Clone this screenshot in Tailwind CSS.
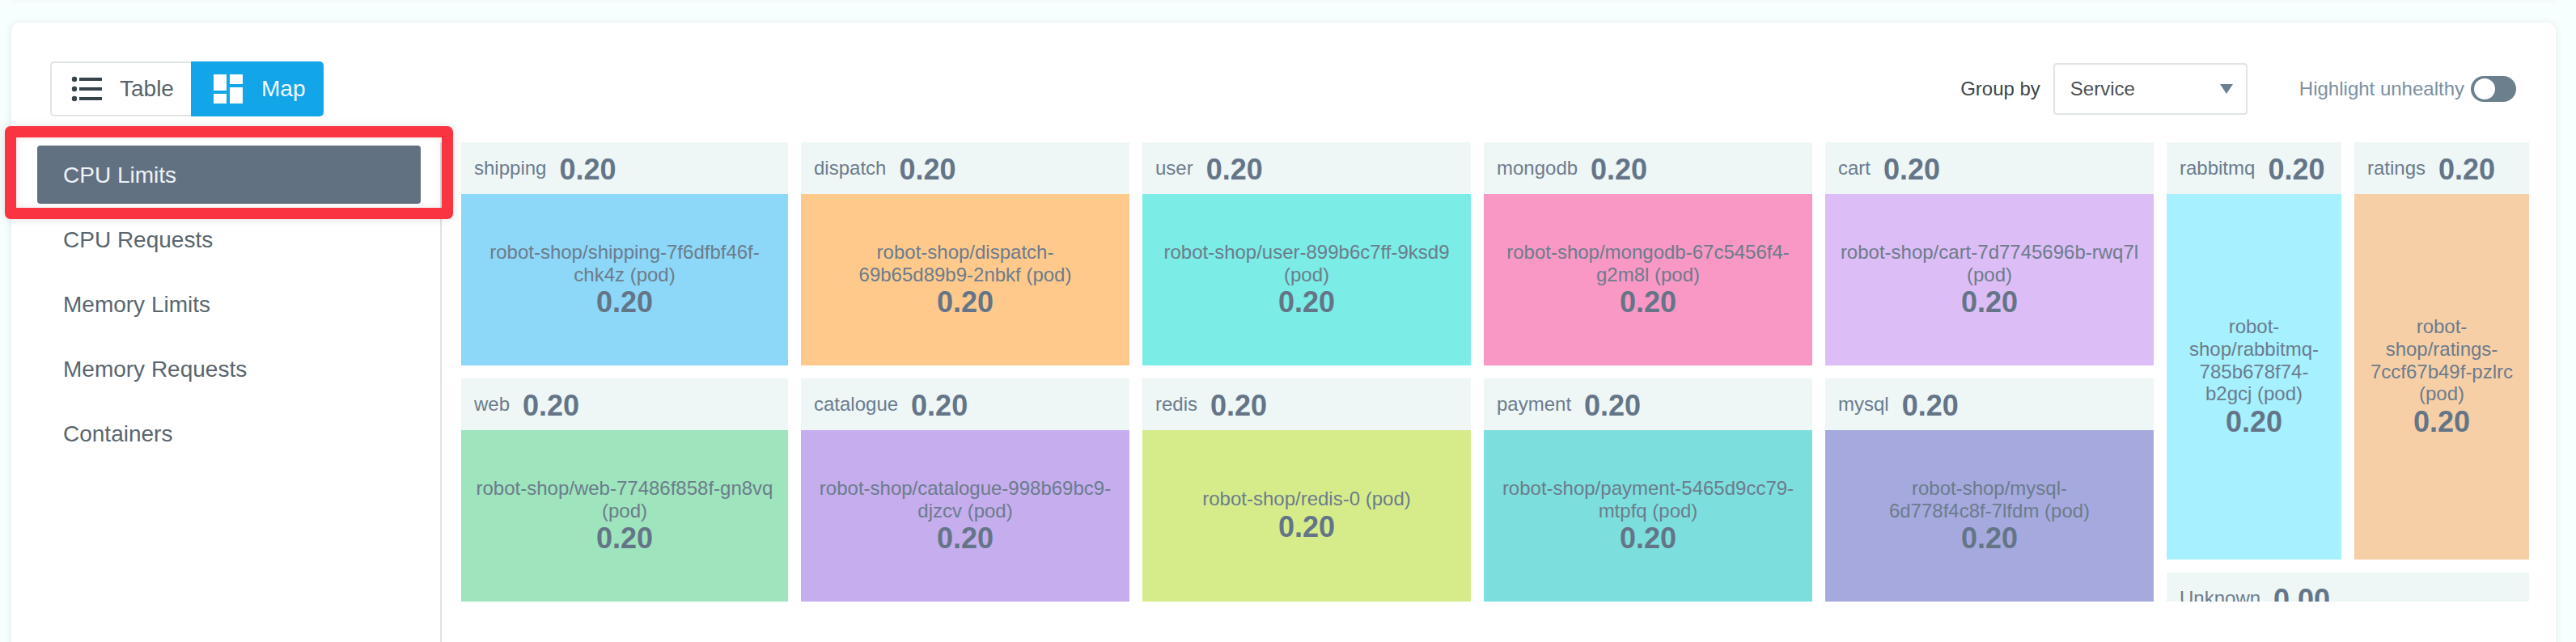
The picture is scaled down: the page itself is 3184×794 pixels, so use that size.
<!DOCTYPE html>
<html lang="en">
<head>
<meta charset="utf-8">
<title>Resource map</title>
<script src="https://cdn.jsdelivr.net/npm/@tailwindcss/browser@4"></script>
</head>
<body class="w-[3184px] h-[794px] overflow-hidden bg-[#f7fffe] font-['Liberation_Sans',Arial,sans-serif] flex flex-col relative">
  <!-- bottom edge of the previous card -->
  <div class="h-px shrink-0 ml-3.5 w-[3145px] bg-[#f9fafa] shadow-[0_0_5px_rgba(90,60,60,0.14)]"></div>
  <section class="mt-[27px] ml-3.5 w-[3145px] h-[800px] shrink-0 rounded-[10px] bg-white shadow-[0_1px_8px_rgba(60,80,60,0.14)] flex flex-col">
    <header class="h-[148px] shrink-0 flex items-start justify-between pl-12 pr-[49px] pt-12">
      <div class="flex h-[68px] w-[338px] text-[28px]">
        <button class="flex items-center w-[174px] rounded-l-[5px] border-2 border-r-0 border-[#dfe6e5] text-[#56636a] pl-[24px]">
          <svg class="w-[40px] h-[32px] shrink-0" viewBox="0 0 40 32" fill="#36444a"><circle cx="4" cy="4" r="3.2"/><circle cx="4" cy="16" r="3.2"/><circle cx="4" cy="28" r="3.2"/><path d="M10 2h28v4H10zM10 14h28v4H10zM10 26h28v4H10z"/></svg>
          <span class="ml-5">Table</span>
        </button>
        <button class="flex items-center flex-1 rounded-r-[5px] bg-[#12a5e8] text-[#f0faff] pl-7">
          <svg class="w-9 h-9 shrink-0" viewBox="0 0 36 36" fill="#fff"><path d="M0 0h16v20H0zM20 0h16v12H20zM0 24h16v12H0zM20 16h16v20H20z"/></svg>
          <span class="ml-[23px]">Map</span>
        </button>
      </div>
      <div class="flex items-center h-[68px] text-2xl">
        <span class="text-[#3d4648]">Group by</span>
        <div class="ml-4 w-[240px] h-16 border-2 border-[#dfe6e5] rounded-[4px] flex items-center justify-between pl-[19px] pr-4 text-[#4a4f51]">
          <span>Service</span>
          <svg class="w-4 h-3" viewBox="0 0 16 12"><path d="M0 0h16L8 12z" fill="#6b8090"/></svg>
        </div>
        <span class="ml-16 text-[#7c90a1]">Highlight unhealthy</span>
        <div class="ml-2 w-14 h-8 rounded-full bg-[#6b7f8d] flex items-center pl-1"><div class="w-[26px] h-[26px] rounded-full bg-white"></div></div>
      </div>
    </header>
    <div class="flex flex-1">
      <nav class="w-[532px] border-r-2 border-[#dde4e3] flex flex-col gap-2 pl-8 pt-1 text-[28px] text-[#5a666e]">
        <a class="w-[474px] h-[72px] rounded-[4px] bg-[#627182] text-[#eef2f4] flex items-center pl-8 pt-px">CPU Limits</a>
        <a class="h-[72px] flex items-center pl-8 pt-px">CPU Requests</a>
        <a class="h-[72px] flex items-center pl-8 pt-px">Memory Limits</a>
        <a class="h-[72px] flex items-center pl-8 pt-px">Memory Requests</a>
        <a class="h-[72px] flex items-center pl-8 pt-px">Containers</a>
      </nav>
      <main class="ml-6 h-[568px] overflow-hidden flex gap-4 text-2xl leading-[27.6px] text-[#6c7c8c]">
        <div class="grid grid-cols-[404px_406px_406px_406px_406px] grid-rows-[276px_276px] gap-4">
          <article class="flex flex-col"><h3 class="h-16 shrink-0 bg-[#eef6f6] flex items-center px-4">shipping<b class="ml-4 pt-1 text-4xl text-[#647588]">0.20</b></h3><div class="flex-1 bg-[#8dd7f8] flex flex-col items-center justify-center text-center whitespace-nowrap"><p>robot-shop/shipping-7f6dfbf46f-<br>chk4z (pod)</p><b class="text-4xl leading-[41px] text-[#647588]">0.20</b></div></article>
          <article class="flex flex-col"><h3 class="h-16 shrink-0 bg-[#eef6f6] flex items-center px-4">dispatch<b class="ml-4 pt-1 text-4xl text-[#647588]">0.20</b></h3><div class="flex-1 bg-[#ffc98c] flex flex-col items-center justify-center text-center whitespace-nowrap"><p>robot-shop/dispatch-<br>69b65d89b9-2nbkf (pod)</p><b class="text-4xl leading-[41px] text-[#647588]">0.20</b></div></article>
          <article class="flex flex-col"><h3 class="h-16 shrink-0 bg-[#eef6f6] flex items-center px-4">user<b class="ml-4 pt-1 text-4xl text-[#647588]">0.20</b></h3><div class="flex-1 bg-[#7bece6] flex flex-col items-center justify-center text-center whitespace-nowrap"><p>robot-shop/user-899b6c7ff-9ksd9<br>(pod)</p><b class="text-4xl leading-[41px] text-[#647588]">0.20</b></div></article>
          <article class="flex flex-col"><h3 class="h-16 shrink-0 bg-[#eef6f6] flex items-center px-4">mongodb<b class="ml-4 pt-1 text-4xl text-[#647588]">0.20</b></h3><div class="flex-1 bg-[#f998c5] flex flex-col items-center justify-center text-center whitespace-nowrap"><p>robot-shop/mongodb-67c5456f4-<br>g2m8l (pod)</p><b class="text-4xl leading-[41px] text-[#647588]">0.20</b></div></article>
          <article class="flex flex-col"><h3 class="h-16 shrink-0 bg-[#eef6f6] flex items-center px-4">cart<b class="ml-4 pt-1 text-4xl text-[#647588]">0.20</b></h3><div class="flex-1 bg-[#dcbdf5] flex flex-col items-center justify-center text-center whitespace-nowrap"><p>robot-shop/cart-7d7745696b-rwq7l<br>(pod)</p><b class="text-4xl leading-[41px] text-[#647588]">0.20</b></div></article>
          <article class="flex flex-col"><h3 class="h-16 shrink-0 bg-[#eef6f6] flex items-center px-4">web<b class="ml-4 pt-1 text-4xl text-[#647588]">0.20</b></h3><div class="flex-1 bg-[#9ee4bd] flex flex-col items-center justify-center text-center whitespace-nowrap"><p>robot-shop/web-77486f858f-gn8vq<br>(pod)</p><b class="text-4xl leading-[41px] text-[#647588]">0.20</b></div></article>
          <article class="flex flex-col"><h3 class="h-16 shrink-0 bg-[#eef6f6] flex items-center px-4">catalogue<b class="ml-4 pt-1 text-4xl text-[#647588]">0.20</b></h3><div class="flex-1 bg-[#c5adee] flex flex-col items-center justify-center text-center whitespace-nowrap"><p>robot-shop/catalogue-998b69bc9-<br>djzcv (pod)</p><b class="text-4xl leading-[41px] text-[#647588]">0.20</b></div></article>
          <article class="flex flex-col"><h3 class="h-16 shrink-0 bg-[#eef6f6] flex items-center px-4">redis<b class="ml-4 pt-1 text-4xl text-[#647588]">0.20</b></h3><div class="flex-1 bg-[#d6ec8b] flex flex-col items-center justify-center text-center whitespace-nowrap"><p>robot-shop/redis-0 (pod)</p><b class="text-4xl leading-[43px] text-[#647588]">0.20</b></div></article>
          <article class="flex flex-col"><h3 class="h-16 shrink-0 bg-[#eef6f6] flex items-center px-4">payment<b class="ml-4 pt-1 text-4xl text-[#647588]">0.20</b></h3><div class="flex-1 bg-[#7cdfde] flex flex-col items-center justify-center text-center whitespace-nowrap"><p>robot-shop/payment-5465d9cc79-<br>mtpfq (pod)</p><b class="text-4xl leading-[41px] text-[#647588]">0.20</b></div></article>
          <article class="flex flex-col"><h3 class="h-16 shrink-0 bg-[#eef6f6] flex items-center px-4">mysql<b class="ml-4 pt-1 text-4xl text-[#647588]">0.20</b></h3><div class="flex-1 bg-[#a5a9de] flex flex-col items-center justify-center text-center whitespace-nowrap"><p>robot-shop/mysql-<br>6d778f4c8f-7lfdm (pod)</p><b class="text-4xl leading-[41px] text-[#647588]">0.20</b></div></article>
        </div>
        <div class="grid grid-cols-[216px_216px] grid-rows-[516px_64px] gap-4">
          <article class="flex flex-col"><h3 class="h-16 shrink-0 bg-[#eef6f6] flex items-center pl-4">rabbitmq<b class="ml-4 pt-1 text-4xl text-[#647588]">0.20</b></h3><div class="flex-1 bg-[#a6f0ff] flex flex-col items-center justify-center text-center whitespace-nowrap"><p>robot-<br>shop/rabbitmq-<br>785b678f74-<br>b2gcj (pod)</p><b class="text-4xl leading-[41px] text-[#647588]">0.20</b></div></article>
          <article class="flex flex-col"><h3 class="h-16 shrink-0 bg-[#eef6f6] flex items-center pl-4">ratings<b class="ml-4 pt-1 text-4xl text-[#647588]">0.20</b></h3><div class="flex-1 bg-[#f7cfa7] flex flex-col items-center justify-center text-center whitespace-nowrap"><p>robot-<br>shop/ratings-<br>7ccf67b49f-pzlrc<br>(pod)</p><b class="text-4xl leading-[41px] text-[#647588]">0.20</b></div></article>
          <article class="col-span-2"><h3 class="h-16 bg-[#eef6f6] flex items-center px-4">Unknown<b class="ml-4 pt-1 text-4xl text-[#647588]">0.00</b></h3></article>
        </div>
      </main>
    </div>
  </section>
  <!-- highlight frame around the selected metric -->
  <div class="absolute left-1.5 top-[156px] w-[554px] h-[115px] border-[14px] border-[#fb3442] rounded-[7px] shadow-[0_0_12px_rgba(0,0,0,0.12),inset_0_0_8px_rgba(0,0,0,0.1)]"></div>
</body>
</html>
